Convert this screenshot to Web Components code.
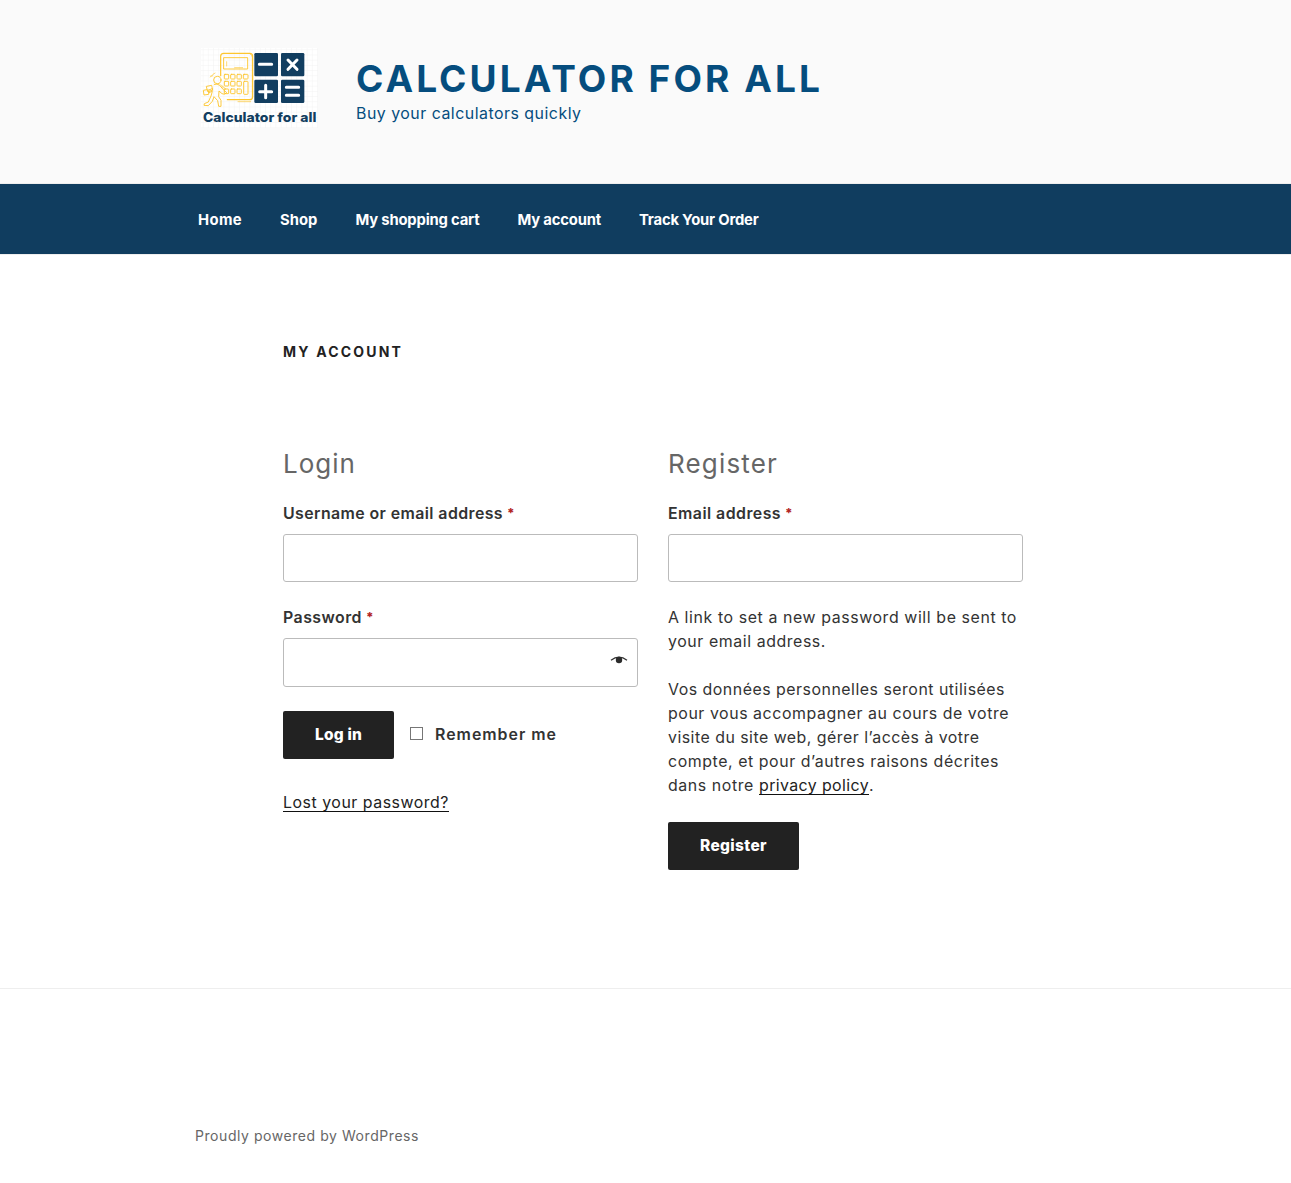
<!DOCTYPE html>
<html lang="en">
<head>
<meta charset="utf-8">
<title>My account - Calculator for all</title>
<style>
body{margin:0;background:#fff;color:#333;font-family:Inter,"Open Sans",sans-serif;font-size:15.9px;line-height:24px}
</style>
</head>
<body>
<site-header></site-header>
<site-nav></site-nav>
<account-page></account-page>
<site-footer></site-footer>
<script>
class BaseElement extends HTMLElement {
  render(html) {
    if (!this.shadowRoot) this.attachShadow({mode:'open'}).innerHTML = '<style>:host,*{box-sizing:border-box}</style>' + html;
  }
}

/* A single line of text tracked out to the width given by its "w" attribute. */
customElements.define('fit-text', class extends BaseElement {
  connectedCallback() {
    this.render('<style>:host{display:inline-block;white-space:pre;vertical-align:top}</style><slot></slot>');
    this.style.letterSpacing = '0px';
    const natural = this.getBoundingClientRect().width;
    const target = parseFloat(this.getAttribute('w'));
    this.style.letterSpacing = (target - natural) / this.textContent.length + 'px';
  }
});

customElements.define('site-logo', class extends BaseElement {
  connectedCallback() {
    this.render(`<style>:host{display:block;width:117px;height:80px}svg{display:block}</style>
    <svg width="117" height="80" viewBox="33 24 351 240">
      <defs><pattern id="g" width="15.6" height="15.6" patternUnits="userSpaceOnUse" x="38" y="28"><path d="M0 0H15.6M0 0V15.6" stroke="#f0f0f0" stroke-width="2.4" fill="none"/></pattern></defs>
      <rect x="33" y="24" width="351" height="240" fill="#fff"/>
      <rect x="33" y="24" width="351" height="240" fill="url(#g)"/>
      <g fill="none" stroke="#fdc62f" stroke-width="2.8" stroke-linejoin="round" stroke-linecap="round">
        <path d="M92 107V49q0-9 9-9h78q9 0 9 9v121q0 9-9 9h-67" stroke-width="3.6"/>
        <path d="M180 41q7 5 7 12v120" stroke-width="2"/>
        <rect x="102" y="53" width="71" height="34"/>
        <path d="M110 65v13M134 83h24" stroke-width="2"/>
        <rect x="103" y="103" width="13" height="14" rx="2"/><rect x="122" y="103" width="13" height="14" rx="2"/><rect x="141" y="103" width="13" height="14" rx="2"/><rect x="160" y="103" width="14" height="14" rx="2"/>
        <rect x="103" y="124" width="13" height="14" rx="2"/><rect x="122" y="124" width="13" height="14" rx="2"/><rect x="141" y="124" width="13" height="14" rx="2"/>
        <rect x="103" y="147" width="13" height="14" rx="2"/><rect x="122" y="147" width="13" height="14" rx="2"/><rect x="141" y="147" width="13" height="14" rx="2"/>
        <rect x="161" y="124" width="13" height="39" rx="2"/>
        <circle cx="82" cy="120" r="11"/>
        <path d="M65 110q3-10 10-11M61 111l3-5" stroke-width="2"/>
        <path d="M50 139l15-3 3 15-14 3zM51 149l-11 2 2 14 14-2 1-9"/>
        <path d="M73 133q9-3 16 3l11 13 10 9q-6 8-14 3l-9-8-1 17 7 11v18h-7l-3-17-11-12-5 14-12 13-13-1 1-5 12-5 8-18 4-14-11 4-3-7 14-5" />
        <path d="M91 134l9 10M96 137l10 9M144 185h38" stroke-width="2"/>
      </g>
      <g fill="#123e60"><rect x="193" y="39" width="71" height="70" rx="4"/><rect x="273" y="39" width="70" height="70" rx="4"/><rect x="193" y="119" width="71" height="70" rx="4"/><rect x="273" y="119" width="70" height="70" rx="4"/></g>
      <g stroke="#fff" stroke-width="9" stroke-linecap="round"><path d="M208 73h37M294 60l27 28M321 60l-27 28M209 155h36M227 136v37M289 142h37M289 166h37"/></g>
      <text x="39" y="246" textLength="340" lengthAdjust="spacingAndGlyphs" font-family="Inter,sans-serif" font-weight="800" font-size="38" fill="#123e60">Calculator for all</text>
    </svg>`);
  }
});

customElements.define('site-header', class extends BaseElement {
  connectedCallback() {
    this.render(`<style>
    :host{display:flex;height:184px;background:#fafafa;border-bottom:1px solid #eee;padding:48px 0 0 201px;gap:38px;color:#054d7e}
    h1{margin:8px 0 0;font-size:37px;line-height:46px;font-weight:700;white-space:nowrap}
    p{margin:0;line-height:24px}
    </style>
    <site-logo></site-logo>
    <div><h1><fit-text w="467">CALCULATOR FOR ALL</fit-text></h1>
    <p><fit-text w="225.5">Buy your calculators quickly</fit-text></p></div>`);
  }
});

customElements.define('site-nav', class extends BaseElement {
  connectedCallback() {
    this.render(`<style>
    :host{display:block;height:71px;background:#103d5f;border-bottom:1px solid #eee}
    nav{display:flex;gap:38px;padding:24px 0 0 198px;color:#fff;font-weight:700;font-size:14.8px;line-height:24px}
    </style>
    <nav><fit-text w="44">Home</fit-text><fit-text w="37.5">Shop</fit-text><fit-text w="124">My shopping cart</fit-text><fit-text w="83.5">My account</fit-text><fit-text w="119.5">Track Your Order</fit-text></nav>`);
  }
});

customElements.define('form-field', class extends BaseElement {
  connectedCallback() {
    const eye = this.hasAttribute('reveal') ? `<svg width="18" height="10" viewBox="0 0 18 10"><path d="M1 5.2Q9 -1 17 5.2" fill="none" stroke="#333" stroke-width="1.2"/><circle cx="9" cy="5" r="3.2" fill="#2b2b2b"/></svg>` : '';
    this.render(`<style>
    :host{display:block}
    label{display:flex;gap:4px;height:32px;line-height:24px;font-weight:600}
    i{font-style:normal;color:#b22222;font-size:13px;line-height:22px;font-weight:800}
    .box{display:flex;justify-content:flex-end;width:355px;height:var(--box-height,48px);border:1px solid #bbb;border-radius:3px;background:#fff;padding:16px 9px 0 0}
    </style>
    <label><slot></slot><i>*</i></label><div class="box">${eye}</div>`);
  }
});

customElements.define('dark-button', class extends BaseElement {
  connectedCallback() {
    this.render(`<style>:host{display:flex;justify-content:center;width:max-content;height:48px;padding:0 32px;line-height:47px;background:#222;color:#fff;border-radius:2px;font-weight:800;font-size:15.5px}</style><slot></slot>`);
  }
});

customElements.define('text-link', class extends BaseElement {
  connectedCallback() {
    this.render(`<style>:host{display:inline-block;height:21px;color:#222;border-bottom:1px solid #111;vertical-align:top}</style><slot></slot>`);
  }
});

customElements.define('account-page', class extends BaseElement {
  connectedCallback() {
    this.render(`<style>
    :host{display:block;height:734px;padding:85px 0 0 283px;border-bottom:1px solid #eee}
    h1{margin:0;font-size:14px;line-height:24px;font-weight:700;color:#222}
    h2{margin:0 0 19px;font-size:26px;line-height:38px;font-weight:400;color:#666}
    .cols{display:flex;gap:30px;margin-top:81px}
    section{width:355px}
    form-field{margin-bottom:24px}
    .tall{--box-height:49px}
    .row{display:flex;align-items:center;height:48px;margin-bottom:32px}
    .check{width:13px;height:13px;border:1px solid #767676;background:#fff;margin:-3px 12px 0 16px}
    .remember{font-weight:600;margin-top:-1px}
    p{margin:0 0 24px;line-height:24px}
    .line{display:flex}
    </style>
    <h1><fit-text w="120">MY ACCOUNT</fit-text></h1>
    <div class="cols">
      <section>
        <h2><fit-text w="73">Login</fit-text></h2>
        <form-field><fit-text w="220">Username or email address</fit-text></form-field>
        <form-field class="tall" reveal><fit-text w="79">Password</fit-text></form-field>
        <div class="row"><dark-button><fit-text w="47">Log in</fit-text></dark-button><div class="check"></div><fit-text class="remember" w="122">Remember me</fit-text></div>
        <text-link><fit-text w="166">Lost your password?</fit-text></text-link>
      </section>
      <section>
        <h2><fit-text w="110">Register</fit-text></h2>
        <form-field><fit-text w="113">Email address</fit-text></form-field>
        <p><fit-text w="349">A link to set a new password will be sent to</fit-text><br><fit-text w="158">your email address.</fit-text></p>
        <p><fit-text w="337">Vos données personnelles seront utilisées</fit-text><br><fit-text w="341">pour vous accompagner au cours de votre</fit-text><br><fit-text w="311.5">visite du site web, gérer l’accès à votre</fit-text><br><fit-text w="331">compte, et pour d’autres raisons décrites</fit-text><br><span class="line"><fit-text w="91">dans notre </fit-text><text-link><fit-text w="110">privacy policy</fit-text></text-link>.</span></p>
        <dark-button><fit-text w="67">Register</fit-text></dark-button>
      </section>
    </div>`);
  }
});

customElements.define('site-footer', class extends BaseElement {
  connectedCallback() {
    this.render(`<style>:host{display:block;height:194px;padding:136px 0 0 195px;font-size:14px;line-height:22px;color:#666}</style><fit-text w="224">Proudly powered by WordPress</fit-text>`);
  }
});
</script>
</body>
</html>
